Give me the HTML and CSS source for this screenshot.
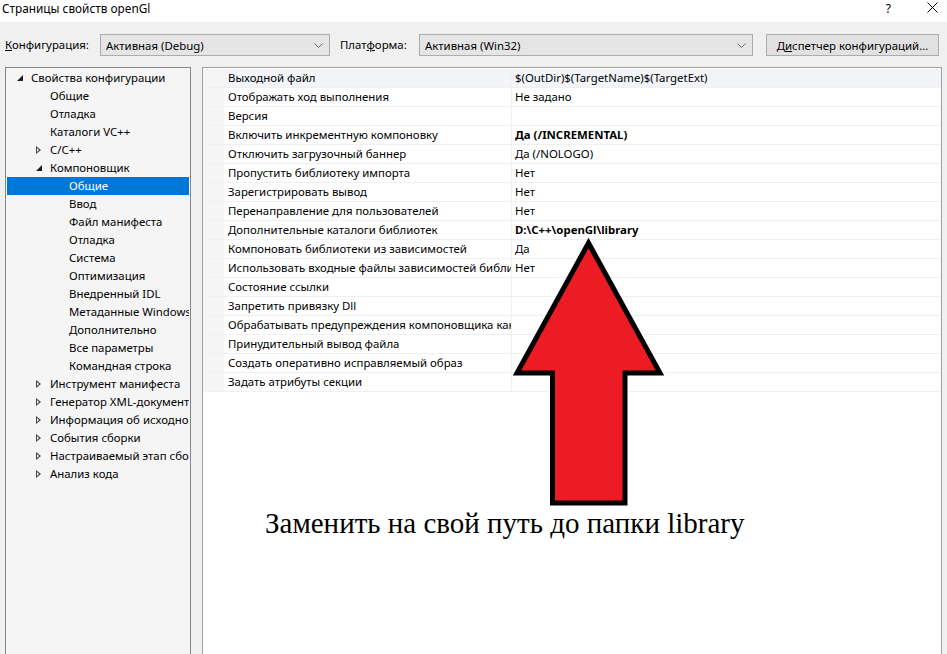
FILE: index.html
```html
<!DOCTYPE html>
<html lang="ru">
<head>
<meta charset="utf-8">
<title>Страницы свойств openGl</title>
<link rel="stylesheet" href="styles.css">
</head>
<body>
<div class="window">
  <div class="titlebar">
    <span class="title">Страницы свойств openGl</span>
    <span class="tb-btn help">?</span>
    <span class="tb-btn close"><svg width="11" height="11" viewBox="0 0 11 11"><path d="M0.5 0.5 L10.5 10.5 M10.5 0.5 L0.5 10.5" stroke="#000" stroke-width="1" fill="none"/></svg></span>
  </div>
  <div class="toolbar">
    <span class="lbl lbl-conf"><u>К</u>онфигурация:</span>
    <div class="combo combo-conf"><span>Активная (Debug)</span><svg class="chev" width="9" height="5" viewBox="0 0 9 5"><path d="M0.5 0.5 L4.5 4.5 L8.5 0.5" stroke="#6d6d6d" fill="none"/></svg></div>
    <span class="lbl lbl-plat">Плат<u>ф</u>орма:</span>
    <div class="combo combo-plat"><span>Активная (Win32)</span><svg class="chev" width="9" height="5" viewBox="0 0 9 5"><path d="M0.5 0.5 L4.5 4.5 L8.5 0.5" stroke="#6d6d6d" fill="none"/></svg></div>
    <button class="btn">Д<u>и</u>спетчер конфигураций...</button>
  </div>
  <div class="main">
    <div class="tree">
      <div class="node l0"><i class="exp open"></i>Свойства конфигурации</div>
      <div class="node l1"><i class="exp"></i>Общие</div>
      <div class="node l1"><i class="exp"></i>Отладка</div>
      <div class="node l1"><i class="exp"></i>Каталоги VC++</div>
      <div class="node l1"><i class="exp closed"></i>C/C++</div>
      <div class="node l1"><i class="exp open"></i>Компоновщик</div>
      <div class="node l2 sel"><i class="exp"></i>Общие</div>
      <div class="node l2"><i class="exp"></i>Ввод</div>
      <div class="node l2"><i class="exp"></i>Файл манифеста</div>
      <div class="node l2"><i class="exp"></i>Отладка</div>
      <div class="node l2"><i class="exp"></i>Система</div>
      <div class="node l2"><i class="exp"></i>Оптимизация</div>
      <div class="node l2"><i class="exp"></i>Внедренный IDL</div>
      <div class="node l2"><i class="exp"></i>Метаданные Windows</div>
      <div class="node l2"><i class="exp"></i>Дополнительно</div>
      <div class="node l2"><i class="exp"></i>Все параметры</div>
      <div class="node l2"><i class="exp"></i>Командная строка</div>
      <div class="node l1"><i class="exp closed"></i>Инструмент манифеста</div>
      <div class="node l1"><i class="exp closed"></i>Генератор XML-документов</div>
      <div class="node l1"><i class="exp closed"></i>Информация об исходном коде</div>
      <div class="node l1"><i class="exp closed"></i>События сборки</div>
      <div class="node l1"><i class="exp closed"></i>Настраиваемый этап сборки</div>
      <div class="node l1"><i class="exp closed"></i>Анализ кода</div>
    </div>
    <div class="grid">
      <div class="row first"><span class="gut"></span><span class="name">Выходной файл</span><span class="val">$(OutDir)$(TargetName)$(TargetExt)</span></div>
      <div class="row"><span class="gut"></span><span class="name">Отображать ход выполнения</span><span class="val">Не задано</span></div>
      <div class="row"><span class="gut"></span><span class="name">Версия</span><span class="val"></span></div>
      <div class="row"><span class="gut"></span><span class="name">Включить инкрементную компоновку</span><span class="val b">Да (/INCREMENTAL)</span></div>
      <div class="row"><span class="gut"></span><span class="name">Отключить загрузочный баннер</span><span class="val">Да (/NOLOGO)</span></div>
      <div class="row"><span class="gut"></span><span class="name">Пропустить библиотеку импорта</span><span class="val">Нет</span></div>
      <div class="row"><span class="gut"></span><span class="name">Зарегистрировать вывод</span><span class="val">Нет</span></div>
      <div class="row"><span class="gut"></span><span class="name">Перенаправление для пользователей</span><span class="val">Нет</span></div>
      <div class="row"><span class="gut"></span><span class="name">Дополнительные каталоги библиотек</span><span class="val b">D:\C++\openGl\library</span></div>
      <div class="row"><span class="gut"></span><span class="name">Компоновать библиотеки из зависимостей</span><span class="val">Да</span></div>
      <div class="row"><span class="gut"></span><span class="name">Использовать входные файлы зависимостей библиотек</span><span class="val">Нет</span></div>
      <div class="row"><span class="gut"></span><span class="name">Состояние ссылки</span><span class="val"></span></div>
      <div class="row"><span class="gut"></span><span class="name">Запретить привязку Dll</span><span class="val"></span></div>
      <div class="row"><span class="gut"></span><span class="name">Обрабатывать предупреждения компоновщика как ошибки</span><span class="val"></span></div>
      <div class="row"><span class="gut"></span><span class="name">Принудительный вывод файла</span><span class="val"></span></div>
      <div class="row"><span class="gut"></span><span class="name">Создать оперативно исправляемый образ</span><span class="val"></span></div>
      <div class="row"><span class="gut"></span><span class="name">Задать атрибуты секции</span><span class="val"></span></div>
    </div>
  </div>
</div>
<svg class="arrow" width="947" height="654" viewBox="0 0 947 654">
  <polygon points="588.5,243 660,373 625,373 625,503 552.5,503 552.5,373 517,373" fill="#ed1c24" stroke="#000" stroke-width="5" stroke-linejoin="miter"/>
</svg>
<div class="note">Заменить на свой путь до папки library</div>
</body>
</html>
```
FILE: styles.css
```css
html, body {
  margin: 0;
  padding: 0;
  width: 947px;
  height: 654px;
  overflow: hidden;
  background: #f0f0f0;
  font-family: "Noto Sans", "Open Sans", sans-serif;
  font-size: 11.4px;
  color: #000;
}
.window {
  display: flex;
  flex-direction: column;
  height: 654px;
  overflow: hidden;
}
.titlebar {
  flex: none;
  height: 22px;
  background: #fff;
  display: flex;
  align-items: flex-start;
}
.title {
  margin-left: 2px;
  line-height: 17px;
  font-size: 11.8px;
}
.help {
  margin-left: auto;
  margin-right: 36px;
  font-size: 12px;
  line-height: 17px;
}
.close {
  margin-right: 9px;
  margin-top: 2px;
  display: flex;
}
.toolbar {
  flex: none;
  height: 45px;
  display: flex;
  align-items: flex-start;
  padding: 12px 0 0 5px;
  box-sizing: border-box;
}
.lbl {
  line-height: 22px;
}
.lbl-conf { width: 95px; }
.lbl-plat { width: 79px; margin-left: 10px; }
.combo {
  height: 22px;
  box-sizing: border-box;
  border: 1px solid #acacac;
  background: #e5e5e5;
  display: flex;
  align-items: center;
  padding: 0 6px 0 5px;
}
.combo span { flex: 1; }
.combo-conf { width: 230px; }
.combo-plat { width: 334px; }
.btn {
  margin-left: 13px;
  width: 173px;
  height: 22px;
  box-sizing: border-box;
  border: 1px solid #adadad;
  background: #e1e1e1;
  font: inherit;
  padding: 0;
  color: #000;
}
.main {
  flex: 1;
  min-height: 0;
  display: flex;
  padding-left: 5px;
  gap: 11px;
  overflow: hidden;
}
.tree {
  flex: none;
  width: 186px;
  height: 620px;
  box-sizing: border-box;
  border: 1px solid #828790;
  background: #f5f5f5;
  padding: 1px;
  overflow: hidden;
}
.node {
  height: 18px;
  line-height: 18px;
  white-space: nowrap;
  overflow: hidden;
  text-overflow: clip;
  display: flex;
  align-items: center;
}
.node.sel {
  background: #0078d7;
  color: #fff;
}
.l0 { padding-left: 9px; }
.l1 { padding-left: 28px; }
.l2 { padding-left: 47px; }
.exp {
  width: 10px;
  height: 18px;
  flex: none;
  position: relative;
  margin-right: 5px;
}
.exp.open::before {
  content: "";
  position: absolute;
  left: 1px;
  top: 6px;
  width: 0;
  height: 0;
  border-left: 6px solid transparent;
  border-bottom: 6px solid #1e1e1e;
}
.exp.closed::before {
  content: "";
  position: absolute;
  left: 1px;
  top: 5px;
  width: 0;
  height: 0;
  border-top: 4px solid transparent;
  border-bottom: 4px solid transparent;
  border-left: 5px solid #444;
}
.exp.closed::after {
  content: "";
  position: absolute;
  left: 2px;
  top: 7px;
  width: 0;
  height: 0;
  border-top: 2px solid transparent;
  border-bottom: 2px solid transparent;
  border-left: 2.5px solid #f5f5f5;
}
.grid {
  flex: none;
  width: 740px;
  height: 620px;
  box-sizing: border-box;
  border: 1px solid #a0a0a0;
  border-bottom: 0;
  background: #fff;
  padding-top: 1px;
}
.row {
  display: flex;
  height: 19px;
  line-height: 18px;
  box-sizing: border-box;
  border-bottom: 1px solid #f0f0f0;
}
.gut {
  width: 21px;
  flex: none;
  background: #f5f5f5;
}
.name {
  width: 288px;
  flex: none;
  padding-left: 4px;
  box-sizing: border-box;
  white-space: nowrap;
  overflow: hidden;
  text-overflow: clip;
  border-right: 1px solid #f0f0f0;
}
.val {
  flex: 1;
  padding-left: 3px;
  white-space: nowrap;
}
.val.b { font-weight: bold; }
.row.first { background: #f2f4f7; }
.arrow {
  position: absolute;
  left: 0;
  top: 0;
}
.note {
  position: absolute;
  left: 265px;
  top: 505px;
  font-family: "Liberation Serif", serif;
  font-size: 29px;
  line-height: 36px;
  color: #000;
}
```
